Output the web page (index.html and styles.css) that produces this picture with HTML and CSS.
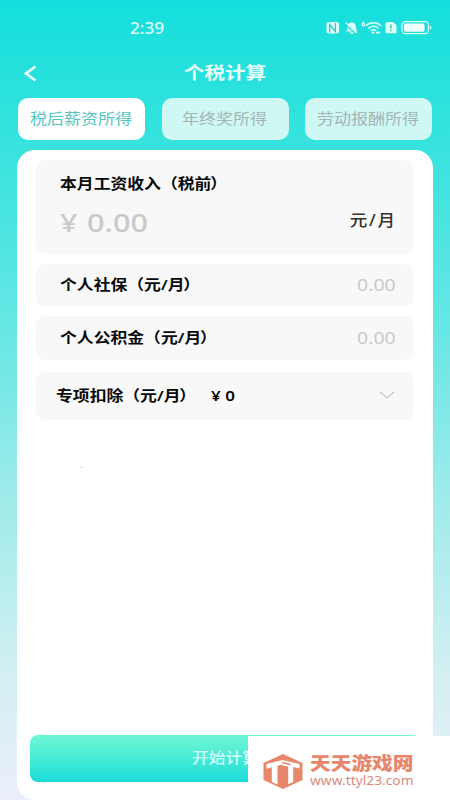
FILE: index.html
```html
<!DOCTYPE html>
<html lang="zh-CN">
<head>
<meta charset="utf-8">
<title>个税计算</title>
<link rel="stylesheet" href="styles.css">
</head>
<body>
<div class="app">
  <header class="status">
    <span class="time wide">2:39</span>
    <svg class="status-icons" width="106" height="16" viewBox="0 0 106 16" fill="none" stroke="#dcfffb">
      <rect x="0.5" y="2" width="12.500" height="11.500" rx="2.5" fill="#dcfffb" stroke="none"/>
      <path d="M3.700 12.500V4.500l5.800 7V3" stroke="#24c9c5" stroke-width="1.2"/>
      <path d="M20 11.500c2-2 1-5.500 2.500-7.500 1.500-2 5-2 6.500 0 1.500 2 .5 5.500 2.500 7.500z" fill="#dcfffb" stroke="none"/>
      <path d="M24 13h4" stroke-width="1.400"/>
      <path d="M18.500 3.500l12 10.500" stroke="#18dcd9" stroke-width="1.500"/>
      <path d="M19.500 2.500l11.500 10.500" stroke-width="1.500"/>
      <path d="M38 1.500c-2 1-2.500 4-.8 4.300 2 .2 2-2.500 0-2.400" stroke-width="1.300"/>
      <path d="M40 5.800c4-4 11-4 15 0M42.500 8.300c3-2.700 7-2.700 10 0M45 10.700c1.500-1.200 3.500-1.200 5 0" stroke-width="1.600"/>
      <path d="M45.500 12.700h3M50 12.700h4" stroke-width="1.700"/>
      <path d="M61 2h6l3.500 3v8.300H59.500V3.500z" fill="#dcfffb" stroke="none"/>
      <path d="M64.900 4.500v4M64.900 9.700v1.500" stroke="#21c4bf" stroke-width="1.400"/>
      <rect x="76" y="1.700" width="26.500" height="11.900" rx="3.500" stroke-width="1.200"/>
      <rect x="78" y="3.500" width="20.500" height="8.300" rx="1.800" fill="#f0fffd" stroke="none"/>
      <path d="M104.600 6v3" stroke-width="1.500"/>
    </svg>
  </header>

  <nav class="titlebar">
    <svg class="back" width="14" height="18" viewBox="0 0 14 18"><path d="M11.500 1.500L2 8.500l9.500 7" fill="none" stroke="#e8fffc" stroke-width="2.700"/></svg>
    <h1 class="title"><span class="wide">个税计算</span></h1>
  </nav>

  <div class="tabs">
    <div class="tab active"><span class="wide">税后薪资所得</span></div>
    <div class="tab"><span class="wide">年终奖所得</span></div>
    <div class="tab"><span class="wide">劳动报酬所得</span></div>
  </div>

  <main class="sheet">
    <section class="box income">
      <div class="label wide">本月工资收入（税前<span class="close">）</span></div>
      <div class="amount-row">
        <span class="amount"><span class="yen wide">¥</span><span class="wide">0.00</span></span>
        <span class="unit wide">元<span class="slash">/</span>月</span>
      </div>
    </section>
    <section class="box line social">
      <span class="label wide">个人社保（元/月<span class="close">）</span></span><span class="value wide">0.00</span>
    </section>
    <section class="box line fund">
      <span class="label wide">个人公积金（元/月<span class="close">）</span></span><span class="value wide">0.00</span>
    </section>
    <section class="box line deduct">
      <span class="label wide">专项扣除（元/月<span class="close">）</span></span><span class="sum wide">¥ 0</span>
      <svg class="chevron" width="17" height="9" viewBox="0 0 17 9"><path d="M1 1l7 6 7-6" fill="none" stroke="#c6c6c6" stroke-width="1.300"/></svg>
    </section>
    <i class="speck"></i>
    <div class="submit"><span class="wide">开始计算</span></div>
  </main>

  <aside class="brand">
    <svg class="brand-mark" width="41" height="37" viewBox="0 0 41 37">
      <path d="M21 1L40.500 10v17L21 36 1.500 27V10z" fill="#e8866b"/>
      <path d="M4.500 11L20.500 7v4.500l-5 1.300v18.700l-5.700-2.500V14.300l-5.300 1.400z" fill="#fff"/>
      <path d="M20.500 7L37.500 11v4.500l-6.300-1.500V29l-5 2.200V13.500l-5.700-1z" fill="#fff"/>
      <path d="M20.500 9.500l8 2" fill="none" stroke="#e8866b" stroke-width="1.400"/>
    </svg>
    <div class="brand-text">
      <span class="brand-name wide">天天游戏网</span>
      <span class="brand-url wide">www.ttyl23.com</span>
    </div>
  </aside>
</div>
</body>
</html>
```

FILE: styles.css
```css
* { box-sizing: border-box; }
body {
  margin: 0;
  font-family: "Noto Sans", "Noto Sans CJK SC", sans-serif;
}
.app {
  position: relative;
  width: 450px;
  height: 800px;
  overflow: hidden;
  display: flex;
  flex-direction: column;
  background: linear-gradient(180deg, #14dfdc 0%, #3be3de 20%, #68e7e5 42%, #9eebea 62%, #d3eff2 84%, #ebeffb 100%);
}
.wide {
  display: inline-block;
  white-space: nowrap;
  transform: scaleX(1.133);
}
.status {
  height: 50px;
  padding: 20px 18px 0 130px;
  display: flex;
  justify-content: space-between;
  align-items: flex-start;
}
.time {
  font-size: 15.5px;
  line-height: 16px;
  font-weight: 500;
  color: #dcfffb;
  transform: scaleX(1.11);
  transform-origin: left;
}
.titlebar {
  height: 48px;
  padding: 0 24px;
  display: grid;
  grid-template-columns: 14px 1fr 14px;
  align-items: center;
}
.title {
  margin: 0 0 4px;
  text-align: center;
  font-size: 17.5px;
  line-height: 24px;
  font-weight: 700;
  color: #e8fffc;
}
.title .wide { transform: scaleX(1.17); }
.tabs {
  display: grid;
  grid-template-columns: repeat(3, 127px);
  gap: 16.5px;
  padding: 0 18px;
  height: 42px;
}
.tab {
  border-radius: 10px;
  background: #cff7f4;
  color: #a3b5b4;
  font-size: 15px;
  line-height: 41px;
  text-align: center;
}
.tab.active {
  background: #fff;
  color: #55c5bf;
}
.sheet {
  position: relative;
  margin: 10px 17px 0;
  padding: 9.5px 19px 0;
  height: 650px;
  border-radius: 18px;
  background: #fff;
  display: flex;
  flex-direction: column;
}
.box {
  flex: none;
  border-radius: 10px;
  background: #f8f8f8;
  color: #080808;
}
.label {
  font-size: 14.5px;
  line-height: 22px;
  font-weight: 600;
  transform: scaleX(1.16);
  transform-origin: left;
}
.close { margin-left: -1px; }
.income {
  height: 94px;
  padding: 12px 19px 0 24px;
}
.amount-row {
  display: flex;
  justify-content: space-between;
  align-items: center;
  height: 36px;
  margin-top: 10px;
}
.amount {
  display: flex;
  font-size: 26px;
  line-height: 36px;
  font-weight: 500;
  color: #c9c9c9;
}
.amount .wide { transform-origin: left; transform: scaleX(1.18); }
.amount .yen { width: 27px; }
.unit {
  font-size: 15.5px;
  line-height: 22px;
  margin-bottom: 3px;
  font-weight: 500;
  color: #333;
  transform-origin: right;
}
.slash { margin: 0 1.5px; }
.line {
  display: flex;
  align-items: center;
  padding: 0 18px 2px 24px;
}
.value {
  margin-left: auto;
  font-size: 16.5px;
  line-height: 22px;
  margin-top: 2px;
  color: #c9c9c9;
  transform: scaleX(1.18);
  transform-origin: right;
}
.social { margin-top: 10px; height: 43px; }
.fund { margin-top: 9.5px; height: 44px; }
.deduct { margin-top: 12px; height: 48px; padding-left: 19.5px; }
.sum {
  margin-left: 34.5px;
  font-size: 15px;
  font-weight: 600;
  transform-origin: left;
}
.chevron { margin-left: auto; }
.speck {
  width: 1px;
  height: 1px;
  margin: 47px 0 0 45px;
  background: #c9a23a;
}
.submit {
  margin: auto -7px 18px -6px;
  height: 47px;
  flex: none;
  border-radius: 8px;
  background: linear-gradient(180deg, #72f7d6, #3de8d5 60%, #1cdbd9);
  color: #d5fffa;
  font-size: 14.8px;
  line-height: 45px;
  font-weight: 500;
  text-align: center;
}
.brand {
  position: absolute;
  left: 248px;
  top: 736px;
  width: 202px;
  height: 64px;
  padding: 17px 0 0 14px;
  display: flex;
  background: #fff;
  color: #e8866b;
}
.brand-text {
  display: flex;
  flex-direction: column;
  align-items: flex-start;
  margin-left: 7px;
}
.brand-text .wide { transform-origin: left; }
.brand-name {
  font-size: 18px;
  line-height: 21px;
  font-weight: 900;
}
.brand-name.wide { transform: scaleX(1.15); }
.brand-url {
  font-size: 12px;
  line-height: 13px;
  color: #d98b7b;
}
.brand-url.wide { transform: scaleX(1.15); }
```
